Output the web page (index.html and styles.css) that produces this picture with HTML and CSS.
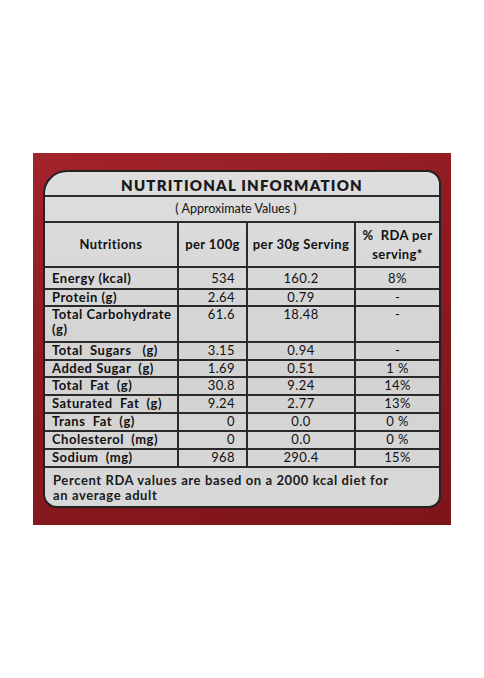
FILE: index.html
```html
<!DOCTYPE html>
<html lang="en">
<head>
  <meta charset="UTF-8">
  <meta name="viewport" content="width=device-width, initial-scale=1.0">
  <title>Nutritional Information</title>
  <link rel="stylesheet" href="styles.css">
</head>
<body>
  <div class="panel">
    <div class="card">
      <!-- Title -->
      <div class="title">NUTRITIONAL INFORMATION</div>
      <div class="subtitle">( Approximate Values )</div>

      <!-- Nutrition table -->
      <table class="facts">
        <colgroup>
          <col class="c-name">
          <col class="c-100">
          <col class="c-30">
          <col class="c-rda">
        </colgroup>
        <tr class="head">
          <th>Nutritions</th>
          <th>per 100g</th>
          <th>per 30g Serving</th>
          <th>% &nbsp;RDA per serving*</th>
        </tr>
        <tr class="r-energy">
          <td>Energy (kcal)</td><td class="num">534</td><td class="mid">160.2</td><td class="mid">8%</td>
        </tr>
        <tr class="r-small">
          <td>Protein (g)</td><td class="num">2.64</td><td class="mid">0.79</td><td class="mid">-</td>
        </tr>
        <tr class="r-tall">
          <td>Total Carbohydrate (g)</td><td class="num">61.6</td><td class="mid">18.48</td><td class="mid">-</td>
        </tr>
        <tr>
          <td>Total &nbsp;Sugars &nbsp;&nbsp;(g)</td><td class="num">3.15</td><td class="mid">0.94</td><td class="mid">-</td>
        </tr>
        <tr class="r-small">
          <td>Added Sugar &nbsp;(g)</td><td class="num">1.69</td><td class="mid">0.51</td><td class="mid">1 %</td>
        </tr>
        <tr>
          <td>Total &nbsp;Fat &nbsp;(g)</td><td class="num">30.8</td><td class="mid">9.24</td><td class="mid">14%</td>
        </tr>
        <tr>
          <td>Saturated &nbsp;Fat &nbsp;(g)</td><td class="num">9.24</td><td class="mid">2.77</td><td class="mid">13%</td>
        </tr>
        <tr>
          <td>Trans &nbsp;Fat &nbsp;(g)</td><td class="num">0</td><td class="mid">0.0</td><td class="mid">0 %</td>
        </tr>
        <tr>
          <td>Cholesterol &nbsp;(mg)</td><td class="num">0</td><td class="mid">0.0</td><td class="mid">0 %</td>
        </tr>
        <tr>
          <td>Sodium &nbsp;(mg)</td><td class="num">968</td><td class="mid">290.4</td><td class="mid">15%</td>
        </tr>
      </table>

      <div class="note">Percent RDA values are based on a 2000 kcal diet for<br>an average adult</div>
    </div>
  </div>
</body>
</html>
```

FILE: styles.css
```css
body {
  margin: 0;
  padding: 0;
  background-color: #fff;
  font-family: Lato, "Open Sans", sans-serif;
  color: #1a1a1a;
}
.panel {
  width: 418px;
  height: 372px;
  margin: 153px 0 0 33px;
  padding: 17px 10px;
  box-sizing: border-box;
  background: linear-gradient(160deg, #a3232b 0%, #8c1a20 45%, #7e151b 100%);
}
.card {
  height: 338px;
  box-sizing: border-box;
  border: 2px solid #222;
  border-radius: 24px 14px 12px 14px;
  overflow: hidden;
  background: linear-gradient(180deg, #dedede 0%, #d2d2d2 60%, #d8d8d8 100%);
  display: flex;
  flex-direction: column;
}
.title {
  height: 23px;
  line-height: 26px;
  text-align: center;
  font-weight: 800;
  font-size: 15px;
  letter-spacing: 1.2px;
  border-bottom: 2px solid #2a2a2a;
}
.subtitle {
  height: 24px;
  line-height: 24px;
  padding-right: 12px;
  text-align: center;
  font-size: 12.5px;
  color: #111;
  border-bottom: 2px solid #2a2a2a;
}
.facts {
  width: 100%;
  border-collapse: collapse;
  table-layout: fixed;
  font-size: 13px;
  letter-spacing: 0.4px;
  color: #111;
}
.c-name { width: 133px; }
.c-100 { width: 69px; }
.c-30 { width: 108px; }
.c-rda { width: auto; }
.facts th,
.facts td {
  border: 2px solid #2a2a2a;
  padding: 0 0 0 7px;
  height: 16px;
  line-height: 15px;
  vertical-align: top;
}
.facts tr > :first-child { border-left: none; }
.facts tr > :last-child { border-right: none; }
.facts .head th {
  border-top: none;
  height: 43px;
  vertical-align: middle;
  font-weight: 700;
  letter-spacing: 0.4px;
  text-align: center;
  padding: 0 1px;
}
.facts .head th:last-child { line-height: 19px; }
.facts td:first-child {
  font-weight: 700;
  letter-spacing: 0.5px;
}
.facts td.num {
  text-align: right;
  padding: 0 11px 0 0;
}
.facts td.mid {
  text-align: center;
  padding: 0;
}
.facts .r-energy td { height: 19px; line-height: 20px; }
.facts .r-small td { height: 15px; }
.facts .r-tall td { height: 34px; }
.note {
  padding: 5px 8px 0 8px;
  font-weight: 700;
  font-size: 13px;
  line-height: 15px;
  letter-spacing: 0.6px;
}
```
